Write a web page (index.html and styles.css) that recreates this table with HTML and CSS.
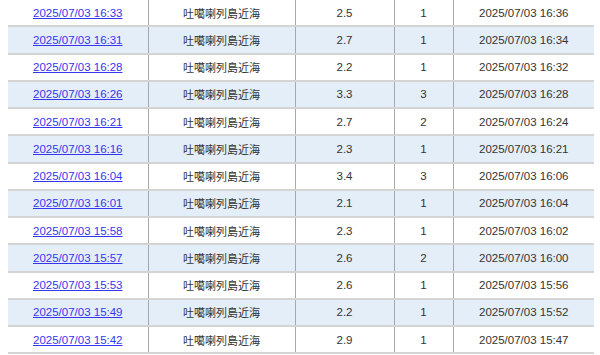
FILE: index.html
```html
<!DOCTYPE html>
<html lang="ja">
<head>
    <meta charset="UTF-8">
    <title>地震情報</title>
    <link rel="stylesheet" href="styles.css">
</head>
<body>
    <div class="wrap">
        <table class="quakes">
            <colgroup>
                <col class="c-time"><col class="c-place"><col class="c-mag"><col class="c-int"><col class="c-pub">
            </colgroup>
            <tbody>
                <tr><td><a href="#">2025/07/03 16:33</a></td><td class="place">吐噶喇列島近海</td><td>2.5</td><td>1</td><td>2025/07/03 16:36</td></tr>
                <tr><td><a href="#">2025/07/03 16:31</a></td><td class="place">吐噶喇列島近海</td><td>2.7</td><td>1</td><td>2025/07/03 16:34</td></tr>
                <tr><td><a href="#">2025/07/03 16:28</a></td><td class="place">吐噶喇列島近海</td><td>2.2</td><td>1</td><td>2025/07/03 16:32</td></tr>
                <tr><td><a href="#">2025/07/03 16:26</a></td><td class="place">吐噶喇列島近海</td><td>3.3</td><td>3</td><td>2025/07/03 16:28</td></tr>
                <tr><td><a href="#">2025/07/03 16:21</a></td><td class="place">吐噶喇列島近海</td><td>2.7</td><td>2</td><td>2025/07/03 16:24</td></tr>
                <tr><td><a href="#">2025/07/03 16:16</a></td><td class="place">吐噶喇列島近海</td><td>2.3</td><td>1</td><td>2025/07/03 16:21</td></tr>
                <tr><td><a href="#">2025/07/03 16:04</a></td><td class="place">吐噶喇列島近海</td><td>3.4</td><td>3</td><td>2025/07/03 16:06</td></tr>
                <tr><td><a href="#">2025/07/03 16:01</a></td><td class="place">吐噶喇列島近海</td><td>2.1</td><td>1</td><td>2025/07/03 16:04</td></tr>
                <tr><td><a href="#">2025/07/03 15:58</a></td><td class="place">吐噶喇列島近海</td><td>2.3</td><td>1</td><td>2025/07/03 16:02</td></tr>
                <tr><td><a href="#">2025/07/03 15:57</a></td><td class="place">吐噶喇列島近海</td><td>2.6</td><td>2</td><td>2025/07/03 16:00</td></tr>
                <tr><td><a href="#">2025/07/03 15:53</a></td><td class="place">吐噶喇列島近海</td><td>2.6</td><td>1</td><td>2025/07/03 15:56</td></tr>
                <tr><td><a href="#">2025/07/03 15:49</a></td><td class="place">吐噶喇列島近海</td><td>2.2</td><td>1</td><td>2025/07/03 15:52</td></tr>
                <tr><td><a href="#">2025/07/03 15:42</a></td><td class="place">吐噶喇列島近海</td><td>2.9</td><td>1</td><td>2025/07/03 15:47</td></tr>
            </tbody>
        </table>
    </div>
</body>
</html>
```

FILE: styles.css
```css
body {
    margin: 0;
    background: #fff;
    font-family: "Liberation Sans", Arial, "Noto Sans CJK JP", sans-serif;
    font-size: 11.5px;
    color: #333;
    overflow: hidden;
}
.wrap {
    padding-left: 8px;
}
.quakes {
    width: 586px;
    border-collapse: collapse;
    table-layout: fixed;
}
.c-time { width: 140px; }
.c-place { width: 147px; }
.c-mag { width: 99px; }
.c-int { width: 59px; }
.c-pub { width: 141px; }
.quakes td {
    height: 25.25px;
    padding: 0;
    text-align: center;
    vertical-align: middle;
    border-bottom: 2px solid #d4d4d4;
    border-left: 1px solid #a8a8a8;
    white-space: nowrap;
}
.quakes td:first-child {
    border-left: none;
}
.quakes td.place {
    font-size: 11px;
}
.quakes tr:nth-child(even) td {
    background: #e4eef8;
}
.quakes a {
    color: #3535ee;
    text-decoration: underline;
}
```
